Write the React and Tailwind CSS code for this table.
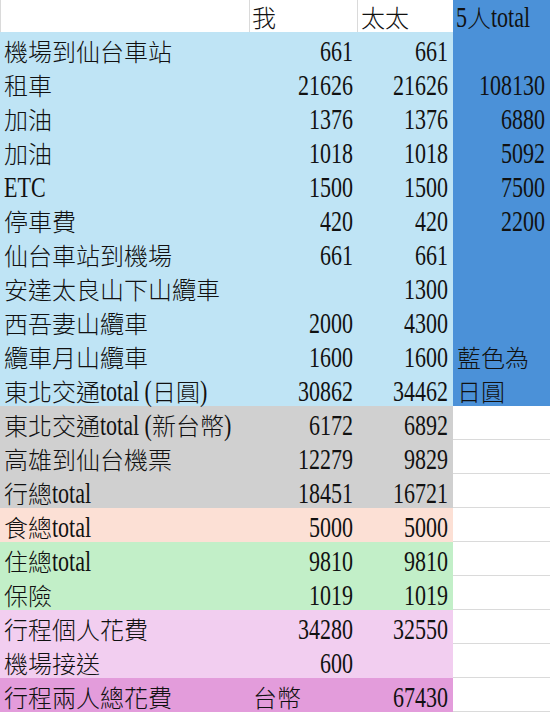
import React from "react";

const LB = "bg-[#bfe4f5]";
const BL = "bg-[#4b91d8]";
const GR = "bg-[#d0d0d0]";
const PE = "bg-[#fce0d5]";
const GN = "bg-[#c2efc8]";
const PK = "bg-[#f2cef0]";
const DP = "bg-[#e39cdb]";

const rows = [
  ["機場到仙台車站", "661", "661", "", LB, BL],
  ["租車", "21626", "21626", "108130", LB, BL],
  ["加油", "1376", "1376", "6880", LB, BL],
  ["加油", "1018", "1018", "5092", LB, BL],
  ["ETC", "1500", "1500", "7500", LB, BL],
  ["停車費", "420", "420", "2200", LB, BL],
  ["仙台車站到機場", "661", "661", "", LB, BL],
  ["安達太良山下山纜車", "", "1300", "", LB, BL],
  ["西吾妻山纜車", "2000", "4300", "", LB, BL],
  ["纜車月山纜車", "1600", "1600", "藍色為", LB, BL],
  ["東北交通total (日圓)", "30862", "34462", "日圓", LB, BL],
  ["東北交通total (新台幣)", "6172", "6892", "", GR, ""],
  ["高雄到仙台機票", "12279", "9829", "", GR, ""],
  ["行總total", "18451", "16721", "", GR, ""],
  ["食總total", "5000", "5000", "", PE, ""],
  ["住總total", "9810", "9810", "", GN, ""],
  ["保險", "1019", "1019", "", GN, ""],
  ["行程個人花費", "34280", "32550", "", PK, ""],
  ["機場接送", "600", "", "", PK, ""],
  ["行程兩人總花費", "台幣", "67430", "", DP, ""],
];

const isNum = (s) => /^\d+$/.test(s);

function T({ s }) {
  const parts = s.split(/([\u0000-\u00ff]+)/).filter((p) => p !== "");
  return (
    <span>
      {parts.map((p, i) =>
        /^[\u0000-\u00ff]+$/.test(p) ? (
          <span
            key={i}
            className="inline-block whitespace-pre font-normal text-[22px] leading-[22px] scale-y-[1.3] origin-[50%_82%]"
          >
            {p}
          </span>
        ) : (
          <span key={i} className="font-light">{p}</span>
        )
      )}
    </span>
  );
}

function Cell({ children, className }) {
  return (
    <div className={"flex items-end h-[34px] pb-[1px] whitespace-nowrap " + className}>
      {children}
    </div>
  );
}

export default function App() {
  return (
    <div
      className="w-[550px] h-[712px] overflow-hidden bg-white text-[#111] text-[24px] leading-[24px]"
      style={{ fontFamily: '"Liberation Serif", "Noto Sans CJK TC", serif' }}
    >
      <div className="grid grid-cols-[250px_108px_95px_97px]">
        <div className="flex items-end h-[32px] pb-[1px] border-l border-r border-[#dadada]"></div>
        <div className="flex items-end h-[32px] pb-[1px] pl-[2px] border-r border-[#dadada]">
          <T s="我" />
        </div>
        <div className="flex items-end h-[32px] pb-[1px] pl-[3px]">
          <T s="太太" />
        </div>
        <div className={"flex items-end h-[32px] pb-[1px] pl-[3px] " + BL}>
          <T s="5人total" />
        </div>

        {rows.map(([a, b, c, d, bg, dbg], i) => (
          <React.Fragment key={i}>
            <Cell className={"pl-[4px] " + bg}>
              <T s={a} />
            </Cell>
            <Cell className={(isNum(b) ? "justify-end pr-[5px] " : "pl-[3px] ") + bg}>
              <T s={b} />
            </Cell>
            <Cell className={"justify-end pr-[5px] " + bg}>
              <T s={c} />
            </Cell>
            <Cell
              className={
                (isNum(d) ? "justify-end pr-[5px] " : "pl-[4px] ") +
                (dbg ? dbg : "bg-white border-b border-[#dadada]")
              }
            >
              <T s={d} />
            </Cell>
          </React.Fragment>
        ))}
      </div>
    </div>
  );
}
